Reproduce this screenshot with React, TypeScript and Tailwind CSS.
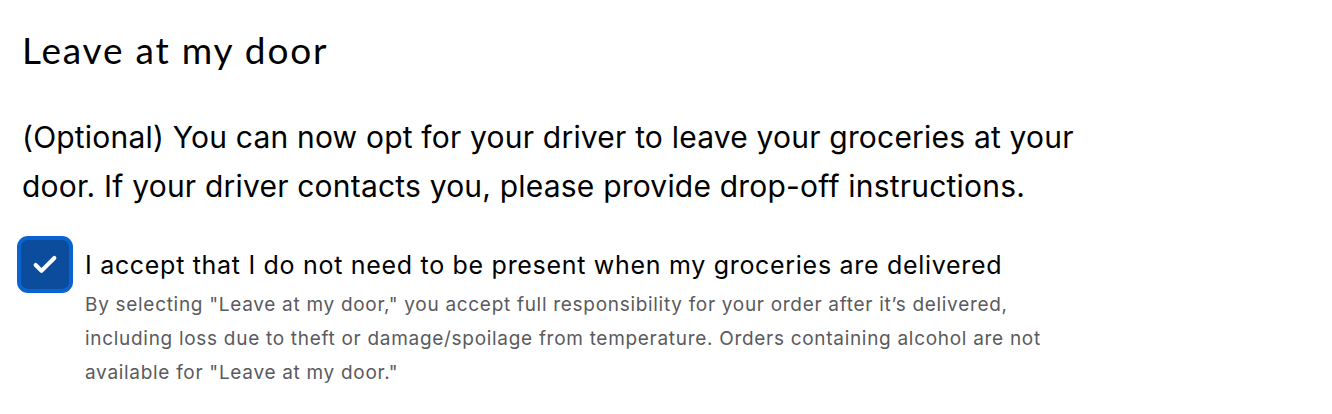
import { Check } from 'lucide-react'

export default function App() {
  return (
    <div className="min-h-[414px] w-[1332px] bg-white px-[22px] pt-[26px] text-black">
      <h2 className="font-['Lato',sans-serif] text-[37px] leading-[48px] font-normal tracking-[1.8px]">
        Leave at my door
      </h2>

      <p className="mt-[39px] max-w-[1080px] font-['Inter',sans-serif] text-[30px] leading-[49px] tracking-[0.2px]">
        (Optional) You can now opt for your driver to leave your groceries at your door. If your driver
        contacts you, please provide drop-off instructions.
      </p>

      <div className="mt-[25px] flex gap-[12px] -ml-[5px]">
        <div className="shrink-0 flex h-[57px] w-[56px] items-center justify-center rounded-[11px] border-[4px] border-[#0a63d1] bg-[#0b4d9c]">
          <Check className="h-[28px] w-[28px] text-white" strokeWidth={3.5} />
        </div>
        <div className="pt-[13px]">
          <div className="font-['Inter',sans-serif] text-[25px] leading-[32px] tracking-[0.7px]">
            I accept that I do not need to be present when my groceries are delivered
          </div>
          <div className="mt-[7px] max-w-[960px] font-['Inter',sans-serif] text-[19px] leading-[34px] tracking-[0.7px] text-[#5a5a5e]">
            By selecting "Leave at my door," you accept full responsibility for your order after it’s delivered,
            including loss due to theft or damage/spoilage from temperature. Orders containing alcohol are not
            available for "Leave at my door."
          </div>
        </div>
      </div>
    </div>
  )
}
